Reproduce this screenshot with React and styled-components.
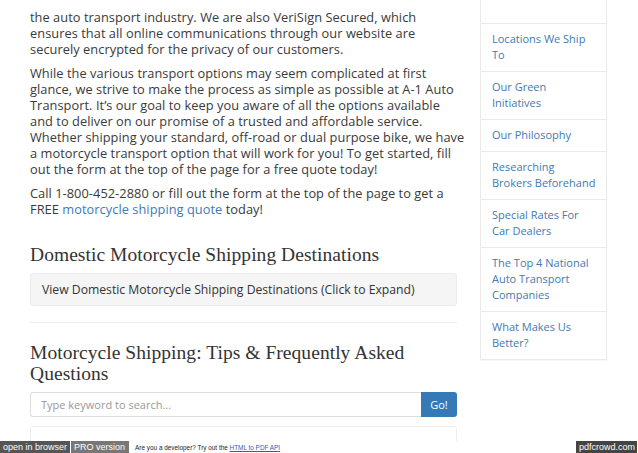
import React from "react";
import styled, { createGlobalStyle } from "styled-components";

const Global = createGlobalStyle`
  html, body { margin: 0; padding: 0; background: #fff; }
  body { font-family: "Open Sans", "Liberation Sans", sans-serif; }
  * { box-sizing: border-box; }
`;

const Page = styled.div`
  width: 638px;
  height: 453px;
  display: flex;
  flex-direction: column;
  overflow: hidden;
`;

const Content = styled.div`
  flex: 1;
  min-height: 0;
  overflow: hidden;
  display: flex;
  align-items: flex-start;
  gap: 23px;
  padding-left: 30px;
`;

const Main = styled.main`
  width: 427px;
  flex-shrink: 0;
  padding-top: 9px;
  color: #3a3a3a;
  font-size: 12.8px;
  letter-spacing: 0.05px;
  line-height: 16px;
`;

const P = styled.p`
  margin: 0 0 8px;
  white-space: nowrap;
`;

const A = styled.a`
  color: #3f7ab5;
  text-decoration: none;
`;

const H2 = styled.h2`
  font-family: "Liberation Serif", "DejaVu Serif", serif;
  font-weight: normal;
  font-size: 19.5px;
  line-height: 21px;
  color: #333;
  margin: ${(p) => p.$top}px 0 8px;
`;

const Panel = styled.div`
  background: #f5f5f5;
  border: 1px solid #ececec;
  border-radius: 3px;
  padding: 8px 11px;
  font-size: 12.2px;
  letter-spacing: 0;
  line-height: 15px;
  color: #333;
`;

const Rule = styled.hr`
  border: 0;
  border-top: 1px solid #eee;
  margin: 16px 0 0;
`;

const SearchRow = styled.div`
  display: flex;
  height: 25px;
`;

const Input = styled.input`
  flex: 1;
  height: 25px;
  border: 1px solid #ddd;
  border-right: 0;
  border-radius: 3px 0 0 3px;
  padding: 0 10px;
  font-family: inherit;
  font-size: 11px;
  color: #999;
  &::placeholder { color: #999; }
`;

const GoButton = styled.button`
  width: 36px;
  height: 25px;
  border: 0;
  border-radius: 0 3px 3px 0;
  background: #337ab7;
  color: #fff;
  font-family: inherit;
  font-size: 11px;
  padding: 0;
`;

const EmptyBox = styled.div`
  margin-top: 9px;
  height: 30px;
  border: 1px solid #eee;
  border-radius: 3px;
`;

const Sidebar = styled.ul`
  list-style: none;
  margin: 0;
  padding: 0;
  width: 127px;
  flex-shrink: 0;
  border: 1px solid #eaeaea;
  border-top: 0;
  box-shadow: 0 1px 1px rgba(0,0,0,0.03);
`;

const Item = styled.li`
  border-top: ${(p) => (p.$first ? "0" : "1px solid #eaeaea")};
  padding: 7px 8px 8px 11px;
  min-height: ${(p) => (p.$first ? "23px" : "0")};
  font-size: 11px;
  line-height: 16px;
  white-space: nowrap;
`;

const SideLink = styled.a`
  color: #3f7ab5;
  text-decoration: none;
`;

const Footer = styled.div`
  height: 12px;
  display: flex;
  align-items: center;
  font-family: "Liberation Sans", Arial, sans-serif;
`;

const Badge = styled.span`
  background: ${(p) => p.$bg};
  color: #fff;
  font-size: 9px;
  height: 12px;
  line-height: 12px;
  padding: 0 ${(p) => p.$pad}px 0 3px;
  margin-right: 1px;
`;

const Note = styled.span`
  font-size: 6.4px;
  color: #222;
  margin-left: 5px;
  flex: 1;
`;

const NoteLink = styled.a`
  color: #3355cc;
  text-decoration: underline;
`;

const links = [
  ["Locations We Ship", "To"],
  ["Our Green", "Initiatives"],
  ["Our Philosophy"],
  ["Researching", "Brokers Beforehand"],
  ["Special Rates For", "Car Dealers"],
  ["The Top 4 National", "Auto Transport", "Companies"],
  ["What Makes Us", "Better?"],
];

export default function App() {
  return (
    <Page>
      <Global />
      <Content>
        <Main>
          <P>
            the auto transport industry. We are also VeriSign Secured, which<br />
            ensures that all online communications through our website are<br />
            securely encrypted for the privacy of our customers.
          </P>
          <P>
            While the various transport options may seem complicated at first<br />
            glance, we strive to make the process as simple as possible at A-1 Auto<br />
            Transport. It’s our goal to keep you aware of all the  options available<br />
            and to deliver on our promise of a trusted and affordable service.<br />
            Whether shipping your standard, off-road or dual purpose bike, we have<br />
            a motorcycle transport option that will work for you! To get started, fill<br />
            out the form at the top of the page for a free quote today!
          </P>
          <P>
            Call 1-800-452-2880 or fill out the form at the top of the page to get a<br />
            FREE <A href="#">motorcycle shipping quote</A> today!
          </P>
          <H2 $top={27}>Domestic Motorcycle Shipping Destinations</H2>
          <Panel>View Domestic Motorcycle Shipping Destinations (Click to Expand)</Panel>
          <Rule />
          <H2 $top={19}>Motorcycle Shipping: Tips &amp; Frequently Asked Questions</H2>
          <SearchRow>
            <Input placeholder="Type keyword to search..." />
            <GoButton>Go!</GoButton>
          </SearchRow>
          <EmptyBox />
        </Main>
        <Sidebar>
          <Item $first />
          {links.map((lines) => (
            <Item key={lines.join(" ")}>
              <SideLink href="#">
                {lines.map((t, i) => (
                  <React.Fragment key={t}>
                    {i > 0 && <br />}
                    {t}
                  </React.Fragment>
                ))}
              </SideLink>
            </Item>
          ))}
        </Sidebar>
      </Content>
      <Footer>
        <Badge $bg="#555" $pad={3}>open in browser</Badge>
        <Badge $bg="#777" $pad={4}>PRO version</Badge>
        <Note>
          Are you a developer? Try out the <NoteLink href="#">HTML to PDF API</NoteLink>
        </Note>
        <Badge $bg="#444" $pad={2}>pdfcrowd.com</Badge>
      </Footer>
    </Page>
  );
}
